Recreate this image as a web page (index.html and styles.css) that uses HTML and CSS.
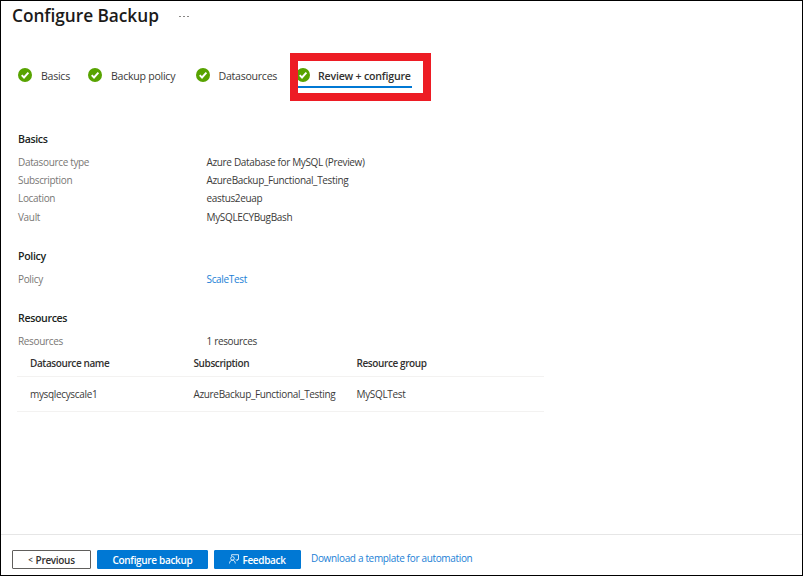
FILE: index.html
```html
<!DOCTYPE html>
<html lang="en">
<head>
<meta charset="utf-8">
<title>Configure Backup</title>
<link rel="stylesheet" href="styles.css">
</head>
<body>
<svg class="defs" aria-hidden="true">
  <symbol id="check" viewBox="0 0 14 14">
    <circle cx="7" cy="7" r="7" fill="#57a300"/>
    <path d="M3.7 7.2 6 9.5 10.4 4.6" fill="none" stroke="#fff" stroke-width="1.9"/>
  </symbol>
</svg>
<div class="page">
  <header class="header">
    <h1>Configure Backup</h1>
    <span class="more"><i></i><i></i><i></i></span>
  </header>
  <nav class="tabs">
    <a class="tab basics"><svg><use href="#check"/></svg><span>Basics</span></a>
    <a class="tab policy"><svg><use href="#check"/></svg><span>Backup policy</span></a>
    <a class="tab sources"><svg><use href="#check"/></svg><span>Datasources</span></a>
    <a class="tab active"><svg><use href="#check"/></svg><span>Review + configure</span><b class="highlight"></b></a>
  </nav>
  <main class="content">
    <section>
      <h2>Basics</h2>
      <dl>
        <dt>Datasource type</dt><dd>Azure Database for MySQL (Preview)</dd>
        <dt>Subscription</dt><dd>AzureBackup_Functional_Testing</dd>
        <dt>Location</dt><dd>eastus2euap</dd>
        <dt>Vault</dt><dd>MySQLECYBugBash</dd>
      </dl>
    </section>
    <section>
      <h2>Policy</h2>
      <dl><dt>Policy</dt><dd><a class="link">ScaleTest</a></dd></dl>
    </section>
    <section>
      <h2>Resources</h2>
      <dl><dt>Resources</dt><dd>1 resources</dd></dl>
      <div class="grid">
        <div class="row head"><span>Datasource name</span><span>Subscription</span><span>Resource group</span></div>
        <div class="row"><span>mysqlecyscale1</span><span>AzureBackup_Functional_Testing</span><span>MySQLTest</span></div>
      </div>
    </section>
  </main>
  <footer class="footer">
    <button class="btn previous"><small>&lt;</small> Previous</button>
    <button class="btn primary configure">Configure backup</button>
    <button class="btn primary feedback"><svg viewBox="0 0 10 10"><path d="M2.6 2.2V.7h6.9v4.8H8.2v1.3L6.9 5.5M.5 9.5C.6 7.3 1.8 6.2 3.4 6.2s2.8 1.1 2.9 3.3"/><circle cx="3.5" cy="4.4" r="1.8"/></svg>Feedback</button>
    <a class="link template">Download a template for automation</a>
  </footer>
</div>
</body>
</html>
```
FILE: styles.css
```css
* { box-sizing: border-box; }
body {
  margin: 0;
  background: #fff;
  color: #3b3a39;
  font-family: "Open Sans", "Noto Sans", sans-serif;
  font-size: 10px;
  letter-spacing: -.34px;
}
.defs { position: absolute; width: 0; height: 0; }
.page {
  display: flex;
  flex-direction: column;
  width: 803px;
  height: 576px;
  border: 1px solid #000;
  overflow: hidden;
}
.header { display: flex; height: 52px; padding-left: 11px; }
h1 {
  width: 167px;
  margin: 0;
  color: #1b1a19;
  font-size: 17.3px;
  font-weight: 600;
  letter-spacing: -.05px;
  line-height: 29px;
  white-space: nowrap;
}
.more { display: flex; gap: 2px; padding-top: 15px; }
.more i { width: 2px; height: 1px; background: #8a8886; }
.tabs { display: flex; height: 48px; padding-left: 17px; }
.tab {
  position: relative;
  display: flex;
  align-items: center;
  height: 35px;
  padding-top: 10px;
  font-size: 10.6px;
  letter-spacing: -.27px;
  white-space: nowrap;
}
.tab svg { flex: none; width: 14px; height: 14px; margin: 0 9px 1px 0; }
.tab.basics { width: 70px; }
.tab.policy { width: 107.5px; }
.tab.sources { width: 100.5px; }
.tab.active {
  width: 116px;
  padding-top: 12px;
  border-bottom: 2px solid #0078d4;
  color: #323130;
  font-weight: 600;
  letter-spacing: -.2px;
}
.tab.active svg { margin-right: 8px; }
.highlight {
  position: absolute;
  left: -6px;
  top: 0;
  width: 141px;
  height: 48px;
  border: 8px solid #ed1c24;
}
.content { flex: 1; padding: 29px 17px 0; }
section { padding-bottom: 21px; }
h2 {
  margin: 0 0 5px;
  color: #201f1e;
  font-size: 10.6px;
  font-weight: 600;
  letter-spacing: -.35px;
  line-height: 18px;
}
dl { display: grid; grid-template-columns: 188.5px 1fr; margin: 0; line-height: 18.2px; }
dt { color: #797775; }
.link { color: #1c7fd6; }
dd { margin: 0; }
.grid { width: 527px; margin-left: -1px; }
.row {
  display: grid;
  grid-template-columns: 163.5px 163px 1fr;
  height: 35px;
  padding-left: 13px;
  border-bottom: 1px solid #f3f2f1;
  line-height: 34px;
}
.row.head { height: 27px; color: #323130; font-weight: 600; letter-spacing: -.4px; line-height: 26px; }
.footer {
  display: flex;
  align-items: flex-start;
  height: 41px;
  padding: 15px 11px 0;
  border-top: 1px solid #e6e6e6;
}
.btn {
  display: flex;
  align-items: center;
  justify-content: center;
  height: 19px;
  margin: 0 6px 0 0;
  padding: 0;
  border: 1px solid #605e5c;
  border-radius: 1px;
  background: #fff;
  color: #323130;
  font: 600 10px "Open Sans", sans-serif;
  letter-spacing: -.32px;
  white-space: nowrap;
}
.previous { width: 79px; }
.previous small { margin-right: 3px; font-size: 8px; }
.primary { border-color: #0078d4; background: #0078d4; color: #fff; }
.configure { width: 111px; }
.feedback { width: 87px; margin-right: 10px; }
.feedback svg { width: 10px; height: 10px; margin: 0 3px 2px 0; fill: none; stroke: #fff; stroke-width: .8; }
.template { line-height: 17px; white-space: nowrap; }
```
